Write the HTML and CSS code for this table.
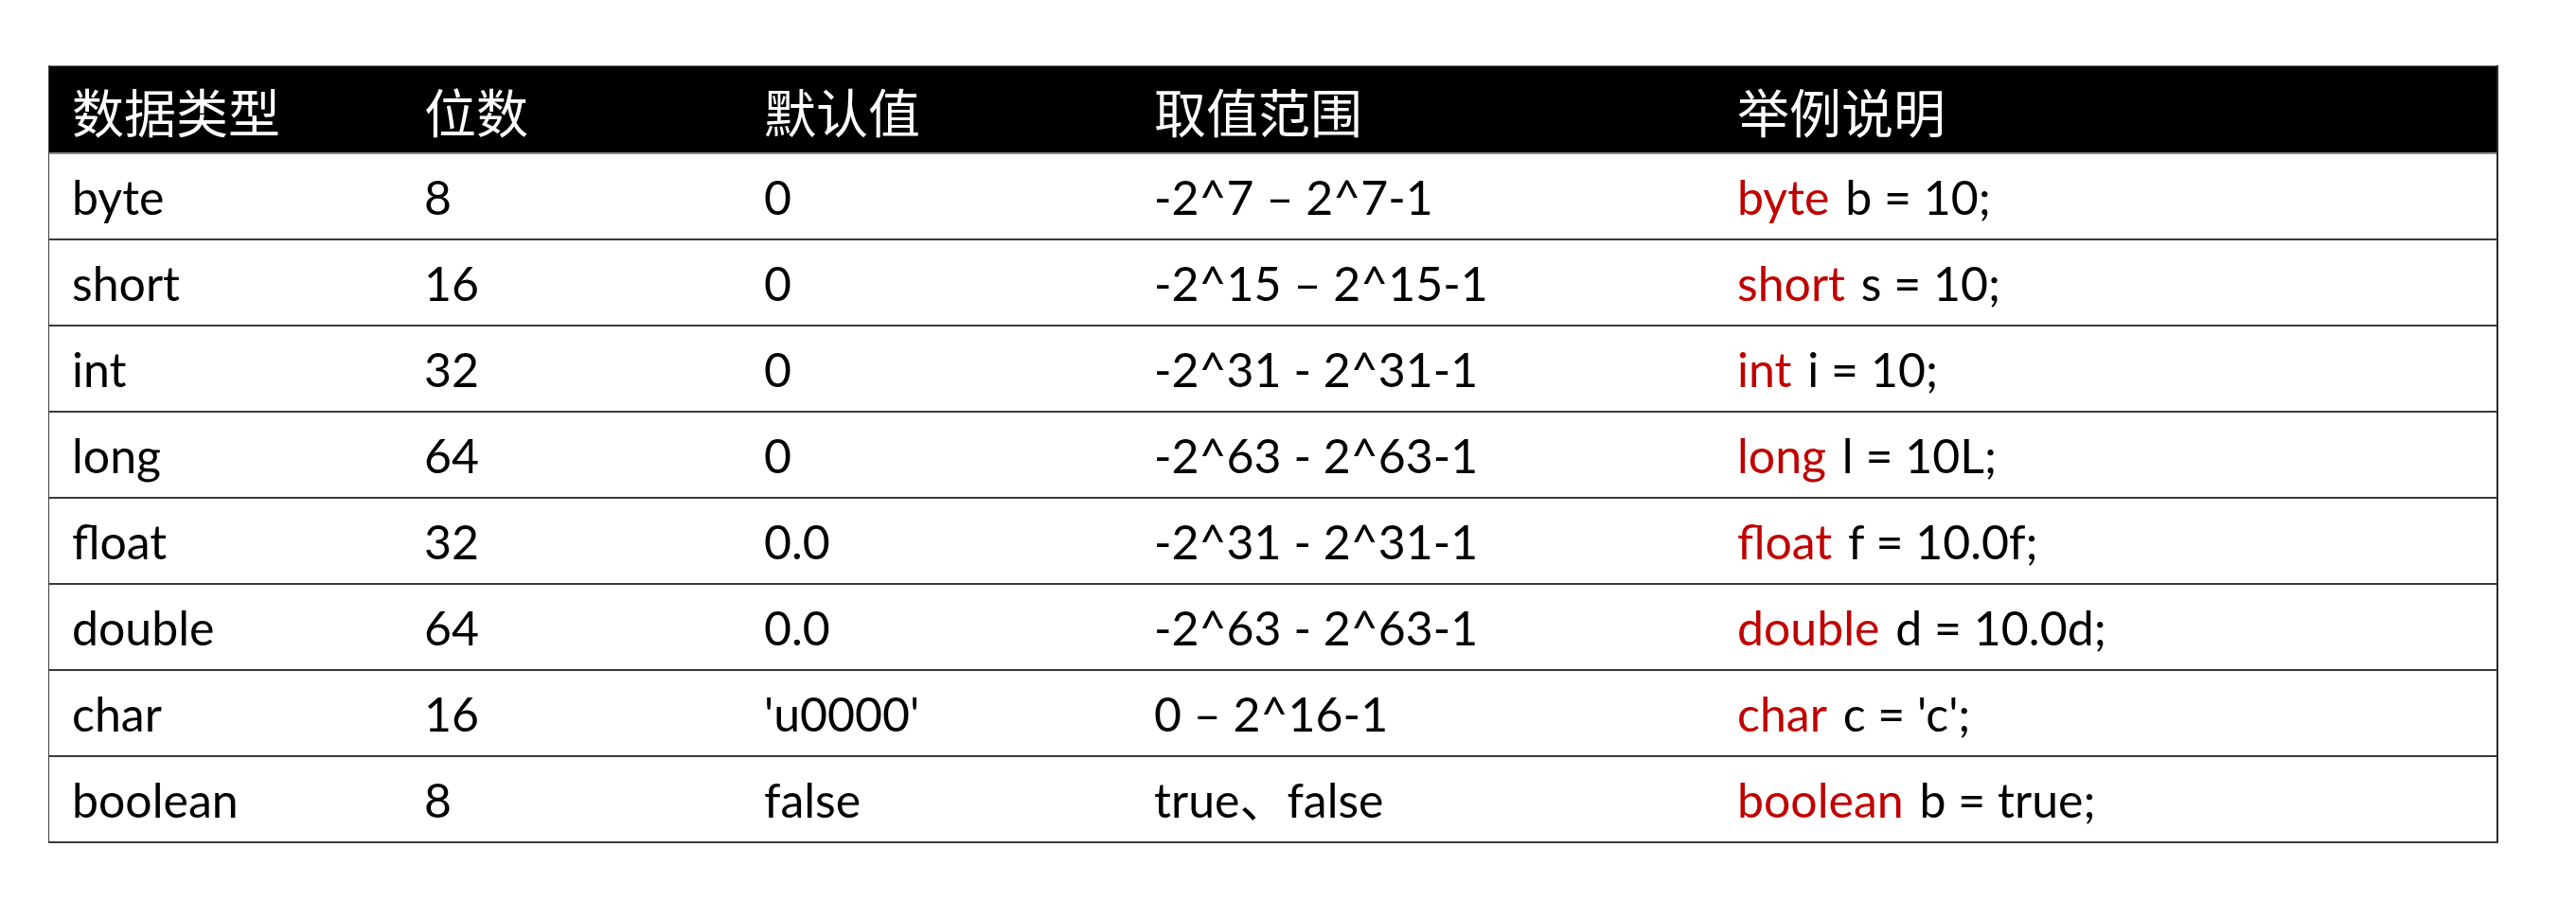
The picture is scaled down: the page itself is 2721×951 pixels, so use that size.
FILE: index.html
```html
<!DOCTYPE html>
<html lang="zh">
<head>
<meta charset="utf-8">
<title>Java 基本数据类型</title>
<link rel="stylesheet" href="styles.css">
</head>
<body>
<div class="table">
  <div class="row head">
    <div class="cell c1">数据类型</div>
    <div class="cell c2">位数</div>
    <div class="cell c3">默认值</div>
    <div class="cell c4">取值范围</div>
    <div class="cell c5">举例说明</div>
  </div>
  <div class="row first">
    <div class="cell c1">byte</div>
    <div class="cell c2">8</div>
    <div class="cell c3">0</div>
    <div class="cell c4">-2^7 – 2^7-1</div>
    <div class="cell c5"><span class="kw">byte</span> b = 10;</div>
  </div>
  <div class="row">
    <div class="cell c1">short</div>
    <div class="cell c2">16</div>
    <div class="cell c3">0</div>
    <div class="cell c4">-2^15 – 2^15-1</div>
    <div class="cell c5"><span class="kw">short</span> s = 10;</div>
  </div>
  <div class="row">
    <div class="cell c1">int</div>
    <div class="cell c2">32</div>
    <div class="cell c3">0</div>
    <div class="cell c4">-2^31 - 2^31-1</div>
    <div class="cell c5"><span class="kw">int</span> i = 10;</div>
  </div>
  <div class="row">
    <div class="cell c1">long</div>
    <div class="cell c2">64</div>
    <div class="cell c3">0</div>
    <div class="cell c4">-2^63 - 2^63-1</div>
    <div class="cell c5"><span class="kw">long</span> l = 10L;</div>
  </div>
  <div class="row">
    <div class="cell c1">float</div>
    <div class="cell c2">32</div>
    <div class="cell c3">0.0</div>
    <div class="cell c4">-2^31 - 2^31-1</div>
    <div class="cell c5"><span class="kw">float</span> f = 10.0f;</div>
  </div>
  <div class="row">
    <div class="cell c1">double</div>
    <div class="cell c2">64</div>
    <div class="cell c3">0.0</div>
    <div class="cell c4">-2^63 - 2^63-1</div>
    <div class="cell c5"><span class="kw">double</span> d = 10.0d;</div>
  </div>
  <div class="row">
    <div class="cell c1">char</div>
    <div class="cell c2">16</div>
    <div class="cell c3">'u0000'</div>
    <div class="cell c4">0 – 2^16-1</div>
    <div class="cell c5"><span class="kw">char</span> c = 'c';</div>
  </div>
  <div class="row">
    <div class="cell c1">boolean</div>
    <div class="cell c2">8</div>
    <div class="cell c3">false</div>
    <div class="cell c4">true、false</div>
    <div class="cell c5"><span class="kw">boolean</span> b = true;</div>
  </div>
</div>
</body>
</html>
```
FILE: styles.css
```css
html, body {
  margin: 0;
  padding: 0;
  background: #ffffff;
}

body {
  padding: 69px 0 0 51px;
  font-family: "Lato", "Noto Sans CJK SC", sans-serif;
  font-size: 50px;
  color: #000000;
}

.table {
  width: 2588px;
  box-sizing: border-box;
  border-left: 1px solid #404040;
  border-right: 2px solid #2a2a2a;
  border-bottom: 2px solid #3a3a3a;
}

.row {
  display: flex;
  height: 91px;
  box-sizing: border-box;
  border-top: 2px solid #3a3a3a;
}

.row.head {
  height: 92px;
  background: #000000;
  color: #ffffff;
  border-top: 1px solid #8a8a8a;
  font-family: "Noto Sans CJK SC", sans-serif;
  font-size: 55px;
}

.row.first {
  border-top: 2px solid #8c8c8c;
}

.cell {
  display: flex;
  align-items: center;
  box-sizing: border-box;
  padding-left: 24px;
  white-space: pre;
  line-height: 1.2;
}

.c1 { width: 372px; }
.c2 { width: 359px; }
.c3 { width: 412px; }
.c4 { width: 616px; }
.c5 { flex: 1; }

.c5 .kw {
  color: #c00000;
  margin-right: 0.08em;
}
```
